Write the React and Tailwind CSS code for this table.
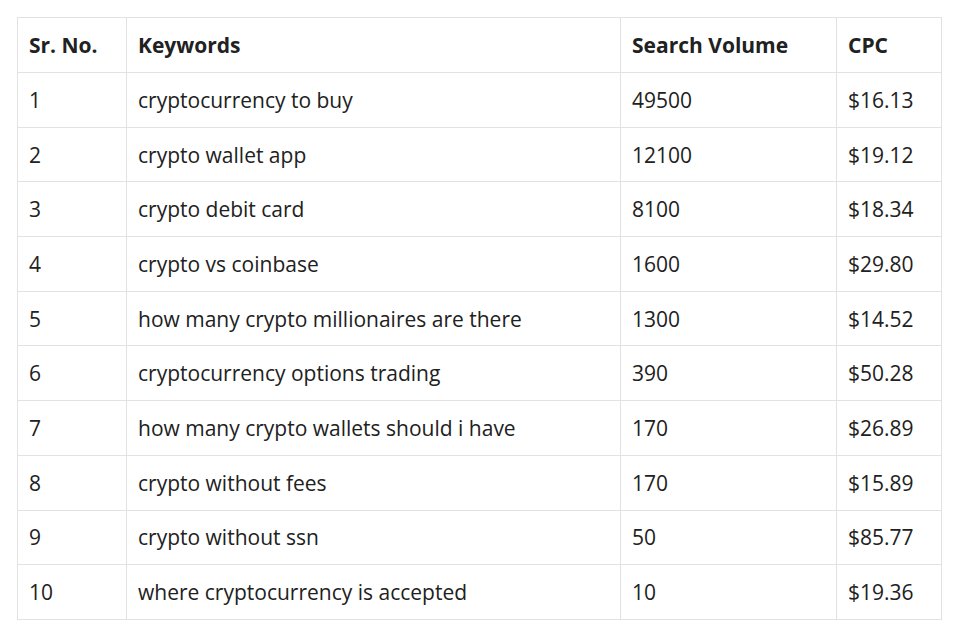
const rows = [
  ['1', 'cryptocurrency to buy', '49500', '$16.13'],
  ['2', 'crypto wallet app', '12100', '$19.12'],
  ['3', 'crypto debit card', '8100', '$18.34'],
  ['4', 'crypto vs coinbase', '1600', '$29.80'],
  ['5', 'how many crypto millionaires are there', '1300', '$14.52'],
  ['6', 'cryptocurrency options trading', '390', '$50.28'],
  ['7', 'how many crypto wallets should i have', '170', '$26.89'],
  ['8', 'crypto without fees', '170', '$15.89'],
  ['9', 'crypto without ssn', '50', '$85.77'],
  ['10', 'where cryptocurrency is accepted', '10', '$19.36'],
];

export default function App() {
  return (
    <div className="min-h-screen bg-white p-[17px] text-[#212121]" style={{ fontFamily: '"Open Sans", "Noto Sans", sans-serif' }}>
      <table className="w-[924px] table-fixed border-collapse text-[21px] leading-[30px]">
        <colgroup>
          <col className="w-[109px]" />
          <col className="w-[494px]" />
          <col className="w-[216px]" />
          <col className="w-[105px]" />
        </colgroup>
        <thead>
          <tr className="h-[55px]">
            {['Sr. No.', 'Keywords', 'Search Volume', 'CPC'].map((h) => (
              <th key={h} className="border border-[#e2e2e2] px-[11px] text-left font-bold">
                {h}
              </th>
            ))}
          </tr>
        </thead>
        <tbody>
          {rows.map((r) => (
            <tr key={r[0]} className="h-[54.7px]">
              {r.map((c, i) => (
                <td key={i} className="border border-[#e2e2e2] px-[11px]">
                  {c}
                </td>
              ))}
            </tr>
          ))}
        </tbody>
      </table>
    </div>
  );
}
